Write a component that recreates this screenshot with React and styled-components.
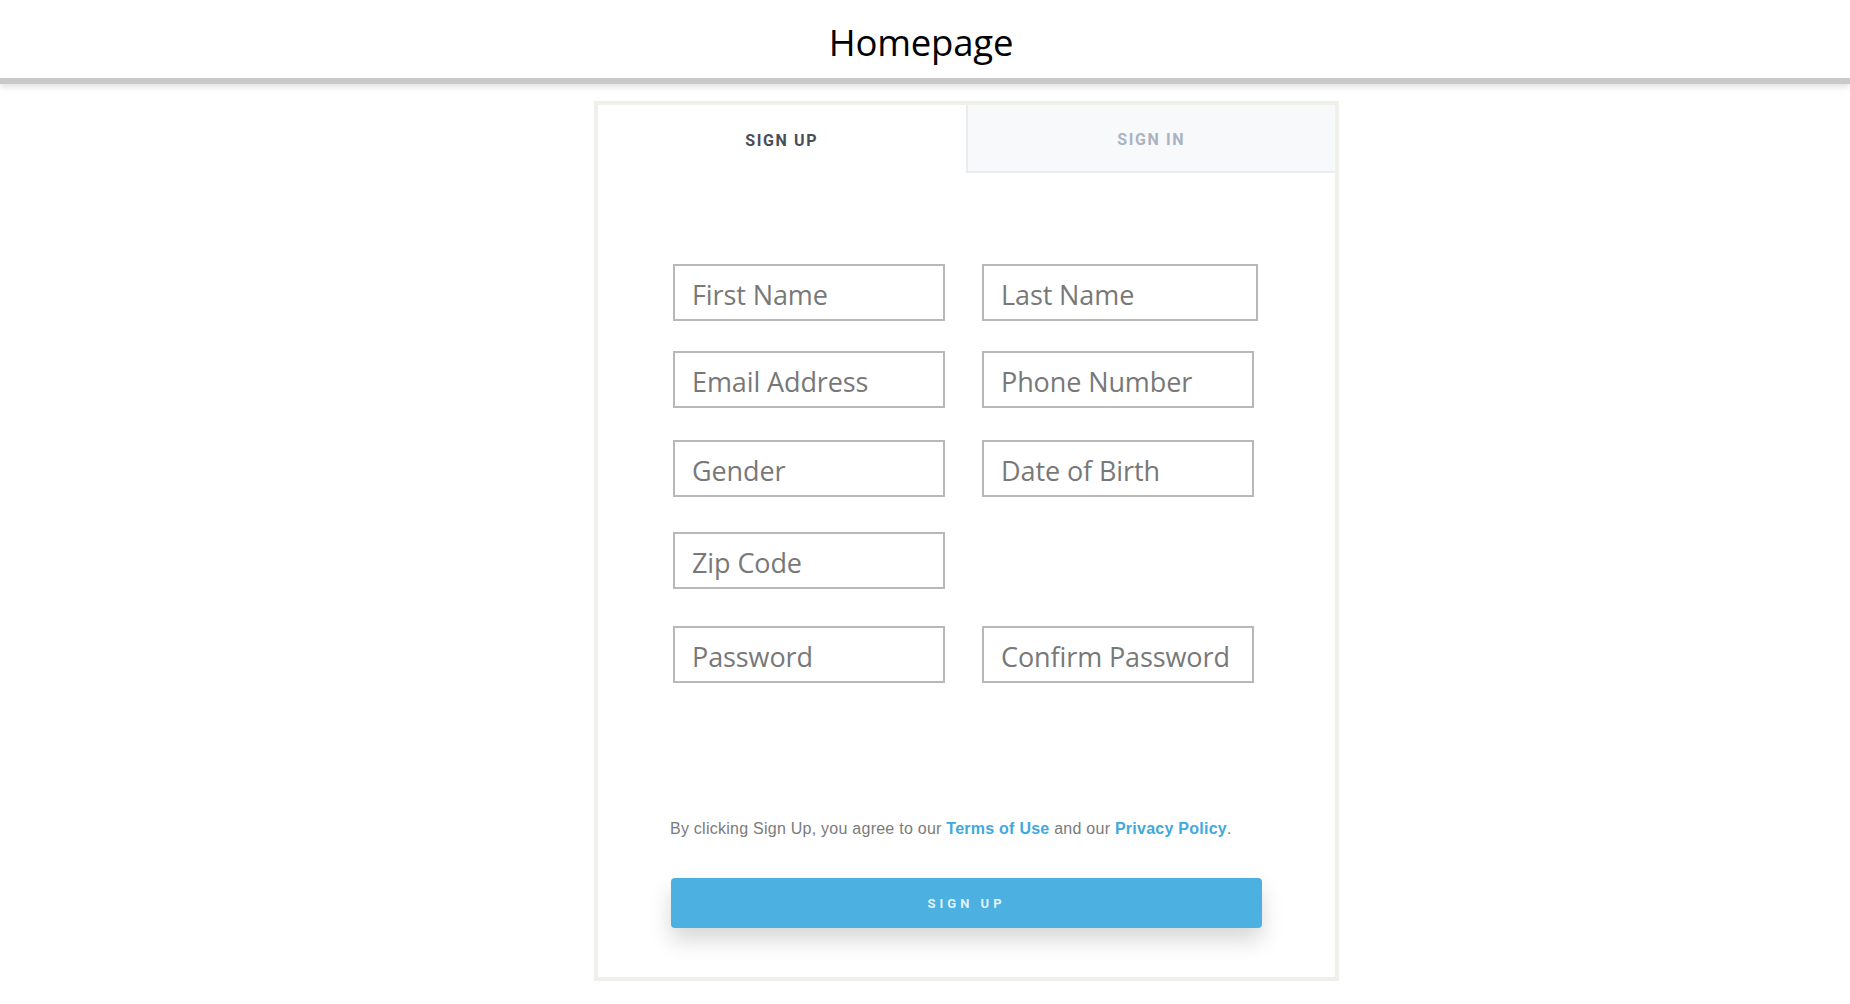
import React from "react";
import styled, { createGlobalStyle } from "styled-components";

const GlobalStyle = createGlobalStyle`
  body {
    margin: 0;
    background: #ffffff;
    font-family: "Open Sans", "Liberation Sans", sans-serif;
  }
`;

const Header = styled.header`
  height: 78px;
  display: flex;
  align-items: center;
  justify-content: center;
  border-bottom: 6px solid #c9c9c9;
  box-shadow: 0 3px 6px rgba(0, 0, 0, 0.12);
`;

const Title = styled.h1`
  margin: 6px 8px 0 0;
  font-family: "Open Sans", sans-serif;
  font-weight: 400;
  font-size: 36.5px;
  letter-spacing: -0.2px;
  color: #000;
`;

const Card = styled.div`
  width: 737px;
  margin: 17px 0 0 594px;
  border: 4px solid #f0f0eb;
  background: #fff;
  box-sizing: content-box;
`;

const Tabs = styled.div`
  display: flex;
  height: 68px;
`;

const Tab = styled.div`
  flex: 1;
  display: flex;
  align-items: center;
  justify-content: center;
  font-family: Roboto, "Liberation Sans", sans-serif;
  font-weight: 700;
  font-size: 16px;
  letter-spacing: 1.6px;
  padding-top: 2px;
  color: ${(p) => (p.active ? "#484e57" : "#a9b3c2")};
  background: ${(p) => (p.active ? "#fff" : "#f8f9fb")};
  border-left: ${(p) => (p.active ? "none" : "2px solid #e9ecf0")};
  border-bottom: ${(p) => (p.active ? "none" : "2px solid #e9ecf0")};
`;

const Form = styled.form`
  padding: 91px 0 0 75px;
`;

const Row = styled.div`
  display: flex;
  gap: 37px;
  margin-top: ${(p) => p.gap || 0}px;
  height: 57px;
`;

const Field = styled.input`
  box-sizing: border-box;
  width: ${(p) => p.w || 272}px;
  height: 57px;
  border: 2px solid #b8b8b8;
  padding: 3px 0 0 17px;
  font-family: "Open Sans", sans-serif;
  font-size: 27px;
  letter-spacing: -0.1px;
  color: #777;
  outline: none;
  &::placeholder {
    color: #787878;
  }
`;

const Terms = styled.p`
  margin: 137px 0 0 -3px;
  font-family: "Liberation Sans", Arial, sans-serif;
  font-size: 16px;
  letter-spacing: 0.25px;
  color: #7b7b7b;
`;

const Link = styled.a`
  color: #3fa9dd;
  font-weight: 600;
  text-decoration: none;
`;

const Button = styled.button`
  display: block;
  margin: 40px 0 0 -2px;
  width: 591px;
  height: 50px;
  border: none;
  border-radius: 4px;
  background: #4cb0e0;
  color: rgba(255, 255, 255, 0.85);
  font-family: Roboto, "Liberation Sans", sans-serif;
  font-weight: 700;
  font-size: 13px;
  letter-spacing: 4px;
  box-shadow: 0 12px 22px rgba(0, 0, 0, 0.16);
`;

const Spacer = styled.div`
  height: 49px;
`;

const rows = [
  { gap: 0, fields: [["First Name"], ["Last Name", 276]] },
  { gap: 30, fields: [["Email Address"], ["Phone Number"]] },
  { gap: 32, fields: [["Gender"], ["Date of Birth"]] },
  { gap: 35, fields: [["Zip Code"]] },
  { gap: 37, fields: [["Password"], ["Confirm Password"]] },
];

export default function App() {
  return (
    <>
      <GlobalStyle />
      <Header>
        <Title>Homepage</Title>
      </Header>
      <Card>
        <Tabs>
          <Tab active>SIGN UP</Tab>
          <Tab>SIGN IN</Tab>
        </Tabs>
        <Form onSubmit={(e) => e.preventDefault()}>
          {rows.map((r, i) => (
            <Row key={i} gap={r.gap}>
              {r.fields.map(([ph, w]) => (
                <Field key={ph} placeholder={ph} w={w} />
              ))}
            </Row>
          ))}
          <Terms>
            By clicking Sign Up, you agree to our <Link href="#">Terms of Use</Link> and
            our <Link href="#">Privacy Policy</Link>.
          </Terms>
          <Button type="submit">SIGN UP</Button>
          <Spacer />
        </Form>
      </Card>
    </>
  );
}
